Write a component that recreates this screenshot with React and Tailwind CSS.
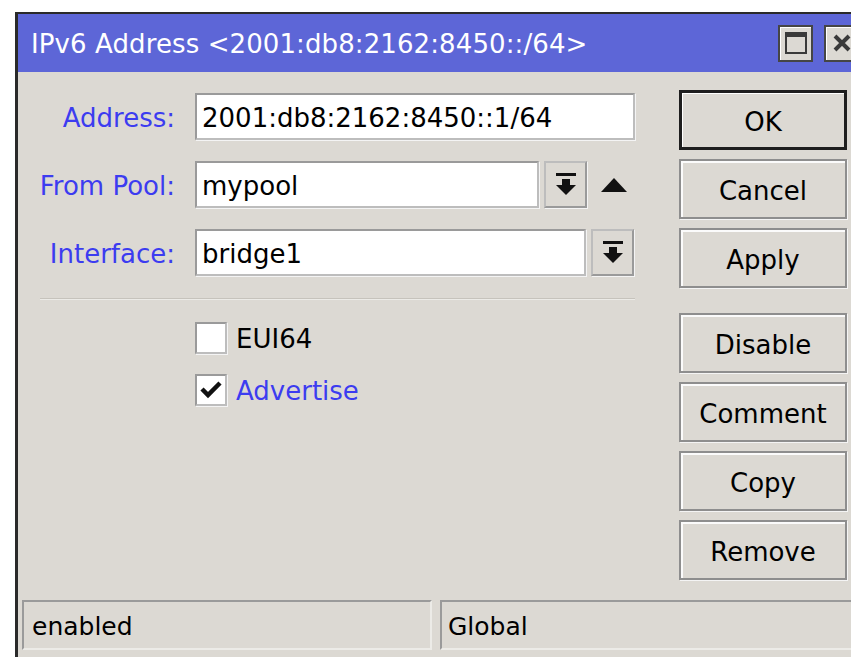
import React from "react";

const ROW_LABEL = "w-[157px] shrink-0 pr-0 text-right text-[#3c3cf0]";
const FIELD =
  "h-[47px] bg-white border-2 border-t-[#9a9a9a] border-l-[#9a9a9a] border-r-[#bdbdbd] border-b-[#bdbdbd] shadow-[1px_1px_0_#f4f4f4] flex items-center px-[5px] pt-[3px] text-black";
const DROP =
  "h-[47px] w-[43px] shrink-0 border-2 border-t-[#bdbdbd] border-l-[#bdbdbd] border-r-[#9a9a9a] border-b-[#9a9a9a] shadow-[1px_1px_0_#f4f4f4] flex items-center justify-center bg-[#dcd9d3]";

const DropIcon = () => (
  <svg width="22" height="25" viewBox="0 0 22 25">
    <rect x="1" y="1" width="20" height="3" fill="#111" />
    <rect x="7" y="7" width="8" height="7" fill="#111" />
    <polygon points="1,13 21,13 11,23" fill="#111" />
  </svg>
);

const Field = ({ label, value, children }) => (
  <div className="flex items-center h-[47px]">
    <div className={ROW_LABEL + " pt-[3px]"}>{label}</div>
    <div className="ml-[20px] flex items-center">{children ?? value}</div>
  </div>
);

const Btn = ({ children, primary }) => (
  <button
    className={
      primary
        ? "w-[168px] h-[60px] pt-[3px] bg-[#dcd9d3] border-[3px] border-[#1e1e1e] shadow-[inset_1px_1px_0_#fff] text-black"
        : "w-[168px] h-[60px] pt-[3px] bg-[#dcd9d3] border-2 border-[#8e8e8e] shadow-[inset_2px_2px_0_#fbfbfb,1px_1px_0_#f4f4f4] text-black"
    }
  >
    {children}
  </button>
);

const Check = ({ checked, label, blue }) => (
  <div className="flex items-center h-[33px]">
    <div className="w-[32px] h-[32px] bg-white border-2 border-t-[#9a9a9a] border-l-[#9a9a9a] border-r-[#bdbdbd] border-b-[#bdbdbd] shadow-[1px_1px_0_#f4f4f4] flex items-center justify-center">
      {checked && (
        <svg width="22" height="20" viewBox="0 0 22 20">
          <path d="M2 9 L8 15 L20 3" stroke="#111" strokeWidth="4.5" fill="none" />
        </svg>
      )}
    </div>
    <span className={"ml-[9px] pt-[3px] " + (blue ? "text-[#3c3cf0]" : "text-black")}>{label}</span>
  </div>
);

const TitleBox = ({ children }) => (
  <div className="w-[35px] h-[37px] bg-[#dcd9d3] border-2 border-[#454545] shadow-[inset_1px_1px_0_#fff] flex items-center justify-center shrink-0">
    {children}
  </div>
);

export default function App() {
  return (
    <div className="w-[851px] h-[657px] bg-white pl-[15px] pt-[12px] overflow-hidden font-['DejaVu_Sans',sans-serif] text-[26px] leading-none">
      <div className="w-[900px] h-[660px] border-l-[3px] border-t-[2px] border-[#2a2a2a] bg-[#dcd9d3] flex flex-col">
        {/* title bar */}
        <div className="h-[58px] bg-[#5d66d7] flex items-center pl-[13px] shrink-0">
          <span className="w-[747px] shrink-0 text-white text-[26px] tracking-[0.1px] pt-[2px]">
            IPv6 Address &lt;2001:db8:2162:8450::/64&gt;
          </span>
          <div className="flex gap-[11px]">
            <TitleBox>
              <div className="w-[22px] h-[22px] border-2 border-t-[5px] border-[#3a3a3a]" />
            </TitleBox>
            <TitleBox>
              <svg width="20" height="20" viewBox="0 0 20 20">
                <path d="M3 3 L17 17 M17 3 L3 17" stroke="#3a3a3a" strokeWidth="4" />
              </svg>
            </TitleBox>
          </div>
        </div>

        {/* body */}
        <div className="flex h-[523px] shrink-0">
          <div className="w-[620px] shrink-0 pt-[21px]">
            <div className="flex flex-col gap-[21px]">
              <Field label="Address:">
                <div className={FIELD + " w-[440px]"}>2001:db8:2162:8450::1/64</div>
              </Field>
              <Field label="From Pool:">
                <div className={FIELD + " w-[344px]"}>mypool</div>
                <div className={DROP + " ml-[5px]"}>
                  <DropIcon />
                </div>
                <svg className="ml-[13px]" width="28" height="16" viewBox="0 0 28 16">
                  <polygon points="1,15 27,15 14,1" fill="#111" />
                </svg>
              </Field>
              <Field label="Interface:">
                <div className={FIELD + " w-[391px]"}>bridge1</div>
                <div className={DROP + " ml-[5px]"}>
                  <DropIcon />
                </div>
              </Field>
            </div>

            <div className="ml-[22px] mt-[22px] w-[595px] h-[2px] border-t border-[#c6c3bc] border-b border-b-[#ecebe7]" />

            <div className="ml-[177px] mt-[21px] flex flex-col gap-[19px]">
              <Check label="EUI64" />
              <Check checked blue label="Advertise" />
            </div>
          </div>

          <div className="ml-[41px] pt-[18px] flex flex-col">
            <div className="flex flex-col gap-[9px]">
              <Btn primary>OK</Btn>
              <Btn>Cancel</Btn>
              <Btn>Apply</Btn>
            </div>
            <div className="mt-[25px] flex flex-col gap-[9px]">
              <Btn>Disable</Btn>
              <Btn>Comment</Btn>
              <Btn>Copy</Btn>
              <Btn>Remove</Btn>
            </div>
          </div>
        </div>

        {/* status bar */}
        <div className="flex pl-[4px] pt-[5px] gap-[8px] text-[25px] text-black">
          <div className="w-[410px] h-[50px] border-2 border-t-[#9a9a9a] border-l-[#9a9a9a] border-r-[#ecebe7] border-b-[#ecebe7] flex items-center pl-[8px] pt-[3px]">
            enabled
          </div>
          <div className="w-[420px] h-[50px] border-2 border-t-[#9a9a9a] border-l-[#9a9a9a] border-r-[#ecebe7] border-b-[#ecebe7] flex items-center pl-[6px] pt-[3px]">
            Global
          </div>
        </div>
      </div>
    </div>
  );
}
